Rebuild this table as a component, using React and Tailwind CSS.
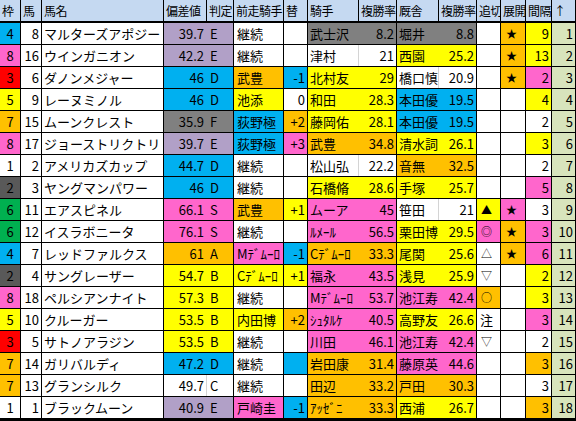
import React from "react";

const BG = {
  W: "bg-white",
  B: "bg-[#00B0F0]",
  P: "bg-[#FF66CC]",
  R: "bg-[#FF0000]",
  Y: "bg-[#FFFF00]",
  O: "bg-[#FFC000]",
  G: "bg-[#808080]",
  D: "bg-[#595959]",
  N: "bg-[#00B050]",
  L: "bg-[#B1A0C7]",
  H: "bg-[#C5D9F1]",
  A: "bg-[#D8E4BC]",
};

const BR = {
  W: "border-r-[#d4d4d4]",
  B: "border-r-[#00B0F0]",
  P: "border-r-[#FF66CC]",
  R: "border-r-[#FF0000]",
  Y: "border-r-[#FFFF00]",
  O: "border-r-[#FFC000]",
  G: "border-r-[#808080]",
  D: "border-r-[#595959]",
  N: "border-r-[#00B050]",
  L: "border-r-[#B1A0C7]",
  H: "border-r-black",
  A: "border-r-[#D8E4BC]",
};

const WAKU = { 1: "W", 2: "D", 3: "R", 4: "B", 5: "Y", 6: "N", 7: "O", 8: "P" };

const COLS =
  "grid grid-cols-[21px_21px_122px_43px_27px_50px_24px_51px_38px_42px_38px_24px_25px_26px_24px]";

// waku, uma, name, hensa, hantei, hBg, zenso, zBg, kae, kBg, kishu, kRate, kiBg, kyu, kyRate, kyBg, oi, oiBg, ten, tenBg, kan, kanBg, rank
const ROWS = [
  [4, 8, "マルターズアポジー", "39.7", "E", "L", "継続", "W", "", "W", "武士沢", "8.2", "G", "堀井", "8.8", "G", "", "W", "★", "O", "9", "Y", 1],
  [8, 16, "ウインガニオン", "42.2", "E", "L", "継続", "W", "", "W", "津村", "21", "W", "西園", "25.2", "Y", "", "W", "★", "O", "13", "Y", 2],
  [3, 6, "ダノンメジャー", "46", "D", "B", "武豊", "O", "-1", "B", "北村友", "29", "Y", "橋口慎", "20.9", "W", "", "W", "★", "O", "2", "P", 3],
  [5, 9, "レーヌミノル", "46", "D", "B", "池添", "Y", "0", "W", "和田", "28.3", "Y", "本田優", "19.5", "B", "", "W", "", "W", "4", "Y", 4],
  [7, 15, "ムーンクレスト", "35.9", "F", "G", "荻野極", "B", "+2", "O", "藤岡佑", "28.1", "Y", "本田優", "19.5", "B", "", "W", "", "W", "2", "W", 5],
  [8, 17, "ジョーストリクトリ", "39.7", "E", "L", "荻野極", "B", "+3", "P", "武豊", "34.8", "O", "清水詞", "26.1", "Y", "", "W", "", "W", "3", "Y", 6],
  [1, 2, "アメリカズカップ", "44.7", "D", "B", "継続", "W", "", "W", "松山弘", "22.2", "W", "音無", "32.5", "O", "", "W", "", "W", "2", "W", 7],
  [2, 3, "ヤングマンパワー", "46", "D", "B", "継続", "W", "", "W", "石橋脩", "28.6", "Y", "手塚", "25.7", "Y", "", "W", "", "W", "5", "P", 8],
  [6, 11, "エアスピネル", "66.1", "S", "P", "武豊", "O", "+1", "Y", "ムーア", "45", "P", "笹田", "21", "W", "▲", "Y", "★", "P", "3", "W", 9],
  [6, 12, "イスラボニータ", "76.1", "S", "P", "継続", "W", "", "W", "ﾙﾒｰﾙ", "56.5", "P", "栗田博", "29.5", "Y", "◎", "P", "★", "O", "3", "P", 10],
  [4, 7, "レッドファルクス", "61", "A", "O", "Mﾃﾞﾑｰﾛ", "P", "-1", "B", "Cﾃﾞﾑｰﾛ", "33.3", "O", "尾関", "25.6", "Y", "△", "W", "★", "O", "6", "P", 11],
  [2, 4, "サングレーザー", "54.7", "B", "Y", "Cﾃﾞﾑｰﾛ", "Y", "+1", "Y", "福永", "43.5", "P", "浅見", "25.9", "Y", "▽", "W", "", "W", "2", "Y", 12],
  [8, 18, "ペルシアンナイト", "57.3", "B", "Y", "継続", "W", "", "W", "Mﾃﾞﾑｰﾛ", "53.7", "P", "池江寿", "42.4", "P", "○", "O", "", "W", "3", "Y", 13],
  [5, 10, "クルーガー", "53.5", "B", "Y", "内田博", "Y", "+2", "O", "ｼｭﾀﾙｹ", "40.5", "P", "高野友", "26.6", "Y", "注", "W", "", "W", "3", "P", 14],
  [3, 5, "サトノアラジン", "53.5", "B", "Y", "継続", "W", "", "W", "川田", "46.1", "P", "池江寿", "42.4", "P", "▽", "W", "", "W", "2", "W", 15],
  [7, 14, "ガリバルディ", "47.2", "D", "B", "継続", "W", "", "B", "岩田康", "31.4", "O", "藤原英", "44.6", "P", "", "W", "", "W", "3", "O", 16],
  [7, 13, "グランシルク", "49.7", "C", "W", "継続", "W", "", "W", "田辺", "33.2", "O", "戸田", "30.3", "O", "", "W", "", "W", "3", "W", 17],
  [1, 1, "ブラックムーン", "40.9", "E", "L", "戸崎圭", "P", "-1", "B", "ｱｯｾﾞﾆ", "33.3", "O", "西浦", "26.7", "Y", "", "W", "", "W", "3", "O", 18],
];

function Cell({ bg = "W", align = "l", pair = false, children, extra = "" }) {
  const al =
    align === "r" ? "justify-end pr-[2px]" : align === "c" ? "justify-center" : "pl-[2px]";
  return (
    <div
      className={`flex items-center h-full overflow-hidden whitespace-nowrap border-r ${
        pair ? BR[bg] : "border-r-black"
      } ${BG[bg]} ${al} ${extra}`}
    >
      {children}
    </div>
  );
}

const HEAD = ["枠", "馬", "馬名", "偏差値", "判定", "前走騎手", "替", "騎手", "複勝率", "厩舎", "複勝率", "追切", "展開", "間隔", "↑"];

export default function App() {
  return (
    <div
      className="w-[576px] h-[421px] bg-white text-black text-[13px] leading-none overflow-hidden"
      style={{ fontFamily: '"Noto Sans CJK JP", "Noto Sans", sans-serif' }}
    >
      <div className="border-b-2 border-black">
        <div className={`${COLS} h-[23px] border-b-2 border-black`}>
          {HEAD.map((h, i) => (
            <Cell key={i} bg="H" align="l" extra="text-[12px] tracking-[-0.5px]">
              {h}
            </Cell>
          ))}
        </div>
        {ROWS.map((r, idx) => (
          <div key={idx} className={`${COLS} h-[22px] border-b border-black`}>
            <Cell bg={WAKU[r[0]]} align="c">{r[0]}</Cell>
            <Cell align="r">{r[1]}</Cell>
            <Cell align="l">{r[2]}</Cell>
            <Cell bg={r[5]} align="r" pair>{r[3]}</Cell>
            <Cell bg={r[5]} align="l" extra="pl-[3px]">{r[4]}</Cell>
            <Cell bg={r[7]} align="l" extra="pl-[3px]">{r[6]}</Cell>
            <Cell bg={r[9]} align="r">{r[8]}</Cell>
            <Cell bg={r[12]} align="l" pair>{r[10]}</Cell>
            <Cell bg={r[12]} align="r">{r[11]}</Cell>
            <Cell bg={r[15]} align="l" pair>{r[13]}</Cell>
            <Cell bg={r[15]} align="r">{r[14]}</Cell>
            <Cell
              bg={r[17]}
              align="l"
              extra={r[16] === "注" ? "pl-[3px] text-[13px]" : "pl-[4px] text-[11px]"}
            >
              {r[16]}
            </Cell>
            <Cell bg={r[19]} align="l" extra="pl-[5px] text-[11px]">{r[18]}</Cell>
            <Cell bg={r[21]} align="r">{r[20]}</Cell>
            <Cell bg="A" align="r">{r[22]}</Cell>
          </div>
        ))}
      </div>
    </div>
  );
}
